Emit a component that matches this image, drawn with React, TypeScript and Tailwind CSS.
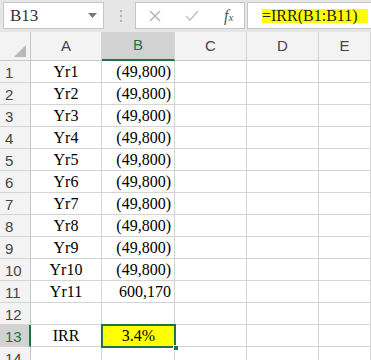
import React from "react";

const rows: { a: string; b: string }[] = [
  { a: "Yr1", b: "(49,800)" },
  { a: "Yr2", b: "(49,800)" },
  { a: "Yr3", b: "(49,800)" },
  { a: "Yr4", b: "(49,800)" },
  { a: "Yr5", b: "(49,800)" },
  { a: "Yr6", b: "(49,800)" },
  { a: "Yr7", b: "(49,800)" },
  { a: "Yr8", b: "(49,800)" },
  { a: "Yr9", b: "(49,800)" },
  { a: "Yr10", b: "(49,800)" },
  { a: "Yr11", b: "600,170" },
  { a: "", b: "" },
];

const serif = { fontFamily: '"Liberation Serif", "Times New Roman", serif' };

function Cell({ children, className = "" }: { children?: React.ReactNode; className?: string }) {
  return (
    <div className={`h-[22px] border-r border-b border-[#d4d4d4] text-[16px] text-black leading-[22px] ${className}`} style={serif}>
      {children}
    </div>
  );
}

function RowHead({ n, active }: { n: number; active?: boolean }) {
  return (
    <div
      className={`h-[22px] pl-[5px] text-[15px] leading-[24px] border-b border-[#d4d4d4] ${
        active ? "bg-[#d2d2d2] text-[#217346] border-r-2 border-r-[#217346]" : "bg-[#f3f3f3] text-[#444] border-r border-r-[#c6c6c6]"
      }`}
    >
      {n}
    </div>
  );
}

export default function App() {
  return (
    <div className="w-[371px] h-[360px] overflow-hidden bg-white" style={{ fontFamily: '"Liberation Sans", Arial, sans-serif' }}>
      {/* Formula bar */}
      <div className="h-[32px] bg-[#e6e6e6] flex items-start pt-[2px]">
        <div className="ml-[3px] w-[101px] h-[27px] bg-white border border-[#c6c6c6] flex items-center justify-between pl-[6px] pr-[6px]">
          <span className="text-[17px] text-[#333]" style={serif}>B13</span>
          <svg width="9" height="6" viewBox="0 0 9 6"><path d="M0 0 L9 0 L4.5 5 Z" fill="#777" /></svg>
        </div>
        <div className="w-[31px] h-[27px] flex flex-col items-center justify-center gap-[3px] pl-[2px]">
          <span className="w-[2px] h-[2px] bg-[#b0b0b0]" />
          <span className="w-[2px] h-[2px] bg-[#b0b0b0]" />
          <span className="w-[2px] h-[2px] bg-[#b0b0b0]" />
        </div>
        <div className="w-[110px] h-[27px] bg-white border border-[#c6c6c6] flex items-center">
          <svg className="ml-[13px]" width="12" height="12" viewBox="0 0 12 12"><path d="M1 1 L11 11 M11 1 L1 11" stroke="#b5b5b5" strokeWidth="1.5" /></svg>
          <svg className="ml-[24px]" width="14" height="12" viewBox="0 0 14 12"><path d="M1 6 L5 10 L13 1" stroke="#c4c4c4" strokeWidth="1.6" fill="none" /></svg>
          <span className="ml-[25px] text-[16px] italic text-[#555]" style={serif}>f<span className="text-[11px]">x</span></span>
        </div>
        <div className="ml-[2px] flex-1 h-[27px] bg-white border border-r-0 border-[#c6c6c6] flex items-center pl-[14px]">
          <span className="bg-[#ffff00] text-[16px] leading-[14px] text-[#222] pr-[10px] whitespace-pre" style={serif}>=IRR(B1:B11)</span>
        </div>
      </div>

      {/* Grid */}
      <div className="grid grid-cols-[31px_71px_73px_72px_72px_1fr]">
        {/* header row */}
        <div className="h-[29px] bg-[#f3f3f3] border-r border-b border-[#c6c6c6] relative">
          <svg className="absolute right-[4px] bottom-[3px]" width="12" height="12" viewBox="0 0 12 12"><path d="M12 0 L12 12 L0 12 Z" fill="#b8b8b8" /></svg>
        </div>
        {["A", "B", "C", "D", "E"].map((c) => (
          <div
            key={c}
            className={`h-[29px] flex items-center justify-center text-[15px] border-r border-[#d4d4d4] ${
              c === "B" ? "bg-[#d2d2d2] text-[#217346] border-b-2 border-b-[#217346]" : "bg-[#f3f3f3] text-[#444] border-b border-b-[#c6c6c6]"
            }`}
          >
            {c}
          </div>
        ))}

        {rows.map((r, i) => (
          <React.Fragment key={i}>
            <RowHead n={i + 1} />
            <Cell className="text-center">{r.a}</Cell>
            <Cell className="text-right pr-[3px]">{r.b}</Cell>
            <Cell />
            <Cell />
            <Cell />
          </React.Fragment>
        ))}

        {/* row 13 */}
        <RowHead n={13} active />
        <Cell className="text-center">IRR</Cell>
        <div className="relative h-[22px] bg-[#ffff00] text-[16px] leading-[22px] text-center outline-2 outline-[#217346] outline-offset-[-1px]" style={serif}>
          3.4%
          <span className="absolute right-[-4px] bottom-[-4px] w-[6px] h-[6px] bg-[#217346] border border-white" />
        </div>
        <Cell />
        <Cell />
        <Cell />

        <RowHead n={14} />
        <Cell />
        <Cell />
        <Cell />
        <Cell />
        <Cell />
      </div>
    </div>
  );
}
